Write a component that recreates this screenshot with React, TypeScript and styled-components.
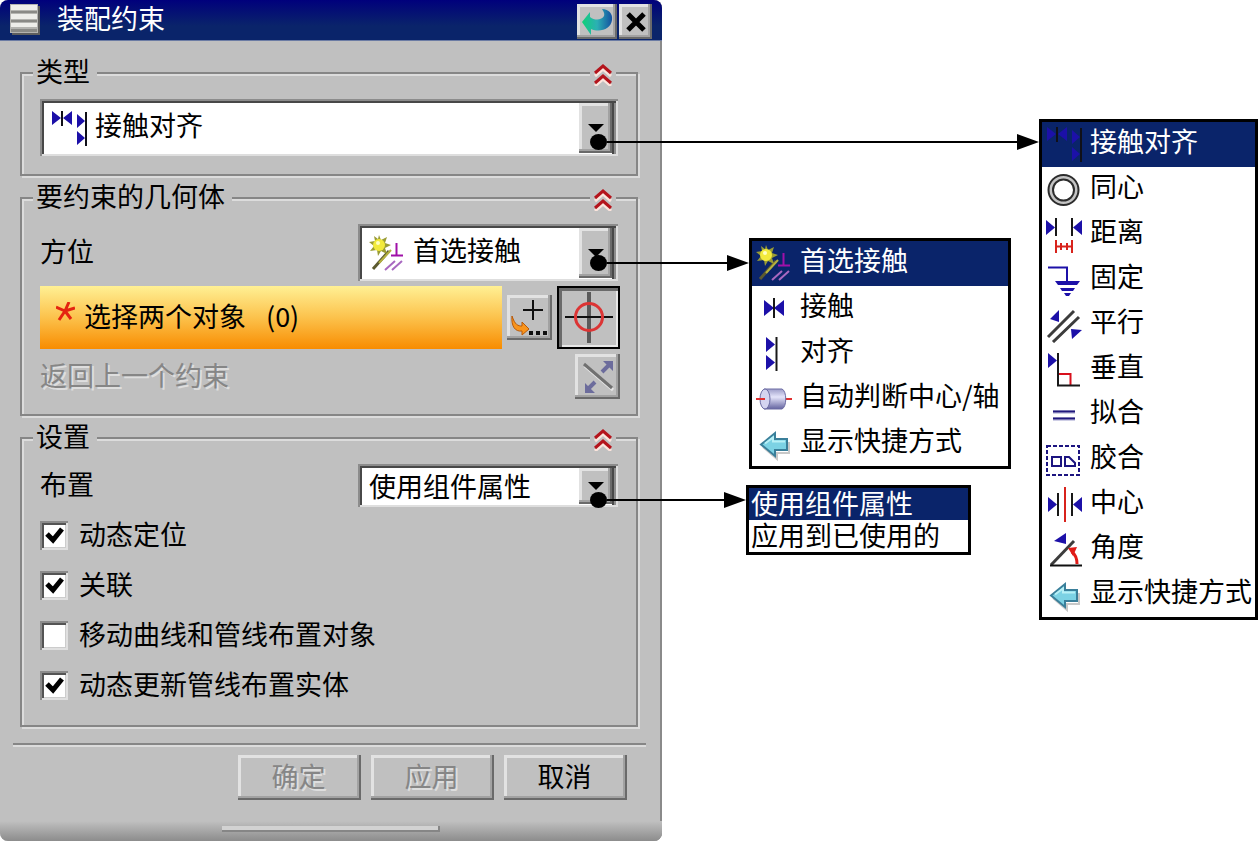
import React, { useState } from "react";
import styled, { createGlobalStyle, css } from "styled-components";

const face = "#c0c0c0";
const navy = "#0a246a";
const blue = "#1c10a8";

const GlobalStyle = createGlobalStyle`
  *, *::before, *::after { box-sizing: border-box; }
  body { margin: 0; background: #fff; }
  body, button, select, input {
    font-family: "Noto Sans CJK SC", "Noto Sans", sans-serif;
    font-size: 27px;
    line-height: 28px;
    color: #000;
  }
`;

const raised = css`
  border: 0;
  background: ${face};
  box-shadow: inset -2px -2px 0 #6a6a6a, inset -4px -4px 0 #a2a2a2,
    inset 3px 3px 0 #e2e2e2;
`;

const Page = styled.main`
  display: grid;
  grid-template-columns: minmax(0, 1fr) 266px 219px;
  column-gap: 27px;
  align-items: start;
`;

/* ---------- dialog ---------- */

const Dialog = styled.section`
  margin-right: 57px;
  background: ${face};
  border-radius: 8px;
  box-shadow: inset -2px 0 0 #8a8a8a;
`;

const TitleBar = styled.header`
  display: flex;
  align-items: flex-start;
  gap: 2px;
  height: 41px;
  padding: 4px 10px 0;
  background: linear-gradient(#00007c, ${navy} 26px);
  border-bottom: 1px solid #6c7ca4;
  border-radius: 8px 8px 0 0;
`;

const Title = styled.h1`
  flex: 1;
  margin: 0 0 0 15px;
  color: #fff;
  font-size: 27px;
  font-weight: 400;
  line-height: 28px;
`;

const TitleButton = styled.button<{ $width: number }>`
  ${raised}
  width: ${(p) => p.$width}px;
  height: 35px;
  padding: 0;
  display: grid;
  place-items: center;
`;

const Body = styled.div`
  display: flex;
  flex-direction: column;
  gap: 8px;
  padding: 18px 24px 0 20px;
`;

const Group = styled.fieldset<{ $foot: number }>`
  position: relative;
  min-width: 0;
  margin: 0;
  padding: 12px 16px ${(p) => p.$foot}px 18px;
  border: 2px solid #868686;
  box-shadow: 2px 2px 0 #dcdcdc, inset 2px 2px 0 #dcdcdc;
`;

const Legend = styled.legend`
  margin-left: -7px;
  padding: 0 7px 4px 3px;
  background: ${face};
  line-height: 24px;
`;

const Collapse = styled.button`
  position: absolute;
  top: -24px;
  right: 20px;
  width: 26px;
  height: 24px;
  padding: 0;
  border: 0;
  background: ${face};
  display: grid;
  place-items: center;
`;

const Stack = styled.div<{ $gap: number }>`
  display: flex;
  flex-direction: column;
  gap: ${(p) => p.$gap}px;
`;

const Row = styled.div`
  display: flex;
  align-items: center;
  gap: 5px;
`;

const RowLabel = styled.label<{ $disabled?: boolean }>`
  flex: 1;
  padding-bottom: 4px;
  ${(p) => p.$disabled && css`
    color: #868686;
    text-shadow: 2px 2px 0 #dedede;
  `}
`;

const ComboFrame = styled.div<{ $wide?: boolean; $height: number }>`
  display: flex;
  align-items: stretch;
  width: ${(p) => (p.$wide ? "auto" : "260px")};
  height: ${(p) => p.$height}px;
  margin-right: 2px;
  padding: 4px 6px 3px 4px;
  background: #fff;
  box-shadow: inset 2px 2px 0 #8c8c8c, inset -2px -2px 0 #dedede,
    inset 4px 4px 0 #484848, inset -4px 0 0 #8c8c8c, inset -6px 0 0 #484848;
  > svg { align-self: center; margin-left: 7px; }
  > svg + select { padding: 0 0 6px 8px; }
`;

const Select = styled.select`
  flex: 1;
  min-width: 0;
  appearance: none;
  border: 0;
  padding: 0 0 0 7px;
  background: transparent;
`;

const ComboArrow = styled.span`
  ${raised}
  flex: none;
  display: grid;
  place-items: center;
  width: 33px;
`;

const SelectBar = styled.div`
  flex: 1;
  display: flex;
  align-items: center;
  height: 63px;
  padding: 0 16px 4px;
  background: linear-gradient(#fff094, #fcc24c 50%, #f88c00);
  > svg { margin-bottom: 8px; }
`;

const BarText = styled.span`margin-left: 9px;`;
const Count = styled.span`margin-left: 20px;`;

const ToolButton = styled.button`
  ${raised}
  width: 45px;
  height: 45px;
  padding: 0;
`;

const TargetButton = styled.button`
  width: 63px;
  height: 63px;
  padding: 0;
  border: 2px solid #000;
  background: ${face};
  box-shadow: inset 3px 3px 0 #6a6a6a, inset -2px -2px 0 #e6e6e6;
`;

const CheckLabel = styled.label`
  display: flex;
  align-items: center;
  gap: 11px;
  height: 50px;
`;

const CheckText = styled.span`padding-bottom: 2px;`;

const CheckCell = styled.span`
  display: grid;
  width: 28px;
  height: 29px;
  > * { grid-area: 1 / 1; margin: 0; }
  > svg { visibility: hidden; pointer-events: none; }
  > input:checked + svg { visibility: visible; }
`;

const CheckInput = styled.input`
  appearance: none;
  background: #fff;
  box-shadow: inset 2px 2px 0 #8c8c8c, inset -2px -2px 0 #e0e0e0,
    inset 4px 4px 0 #545454, inset -3px -3px 0 #cccccc;
`;

const Footer = styled.footer`
  display: flex;
  justify-content: flex-end;
  gap: 10px;
  margin: 16px 16px 0 13px;
  padding: 10px 19px 0 0;
  border-top: 2px solid #868686;
  box-shadow: inset 0 2px 0 #dcdcdc;
`;

const PushButton = styled.button`
  ${raised}
  width: 123px;
  height: 45px;
  padding: 0 2px 4px 0;
  &:disabled {
    color: #868686;
    text-shadow: 2px 2px 0 #dedede;
  }
`;

const Grip = styled.div`
  display: flex;
  justify-content: center;
  height: 20px;
  margin-top: 21px;
  padding-top: 5px;
  background: linear-gradient(${face}, #8c8c8c);
  border-radius: 0 0 8px 8px;
`;

const GripBar = styled.span`
  width: 33%;
  height: 6px;
  background: #d2d2d2;
  box-shadow: inset -2px -2px 0 #868686;
`;

/* ---------- pop-up lists ---------- */

const MiddleColumn = styled.div`
  display: flex;
  flex-direction: column;
  gap: 16px;
  padding-top: 238px;
`;

const RightColumn = styled.div`padding-top: 119px;`;

const Popup = styled.div<{ $width: string; $indent?: number }>`
  position: relative;
  width: ${(p) => p.$width};
  margin-left: ${(p) => p.$indent ?? 0}px;
`;

const List = styled.ul`
  margin: 0;
  padding: 0;
  list-style: none;
  border: 3px solid #000;
  background: #fff;
`;

const Item = styled.button<{ $active: boolean; $compact?: boolean }>`
  display: flex;
  align-items: center;
  gap: 8px;
  width: 100%;
  height: ${(p) => (p.$compact ? 32 : 45)}px;
  padding: 0 0 0 ${(p) => (p.$compact ? 2 : 4)}px;
  border: 0;
  background: ${(p) => (p.$active ? navy : "#fff")};
  color: ${(p) => (p.$active ? "#fff" : "#000")};
  white-space: nowrap;
  > span { padding-bottom: ${(p) => (p.$compact ? 2 : 7)}px; }
`;

const Connector = styled.div<{ $length: number; $top: number }>`
  position: absolute;
  right: 100%;
  top: ${(p) => p.$top}px;
  width: ${(p) => p.$length}px;
  height: 16px;
  display: flex;
  align-items: center;
  pointer-events: none;
  &::before {
    content: "";
    width: 17px;
    height: 16px;
    border-radius: 50%;
    background: #000;
  }
  &::after {
    content: "";
    border: solid transparent;
    border-width: 8px 0 8px 22px;
    border-left-color: #000;
  }
`;

const Line = styled.span`
  flex: 1;
  height: 2px;
  background: #000;
`;

/* ---------- drawings ---------- */

const Glyph = ({ children }: { children: React.ReactNode }) => (
  <svg width="36" height="37" viewBox="0 0 36 37" fill="none" aria-hidden="true">
    {children}
  </svg>
);

const icons = {
  contactAlign: (
    <Glyph>
      <path d="M1 1l9 7-9 7zM21 1l-9 7 9 7zM26 4l8 7-8 7zM26 21l8 7-8 7z" fill={blue} />
      <path d="M11 1v15M35 2v34" stroke="#101018" strokeWidth="2" />
    </Glyph>
  ),
  concentric: (
    <Glyph>
      <circle cx="17.500" cy="19" r="13" stroke="#c4c4c4" strokeWidth="4" />
      <circle cx="17.500" cy="19" r="15" stroke="#2c2c2c" strokeWidth="2" />
      <circle cx="17.500" cy="19" r="10.500" stroke="#2c2c2c" strokeWidth="2" />
    </Glyph>
  ),
  distance: (
    <Glyph>
      <path d="M0 4l9 7.500-9 7.500zM36 4l-9 7.500 9 7.500z" fill={blue} />
      <path d="M10 2v18M26 2v18" stroke="#181818" strokeWidth="2" />
      <path d="M10 24v13M26 24v13M10 30.500h16M15 27v7M21 27v7" stroke="#d8231c" strokeWidth="2" />
    </Glyph>
  ),
  fixed: (
    <Glyph>
      <path d="M2 6.500h19V21" stroke={blue} strokeWidth="2" />
      <path d="M9 20h25l-3 4H12zM14 27h15l-2 3H16zM18 32h7l-2 3h-3z" fill={blue} />
    </Glyph>
  ),
  parallel: (
    <Glyph>
      <path d="M2 31L28 5M7 36L33 11" stroke="#3c3c3c" strokeWidth="3" />
      <path d="M4 13l9-9v12zM25 23l11 1-10 9z" fill={blue} />
    </Glyph>
  ),
  perpendicular: (
    <Glyph>
      <path d="M2 2l9 7.500L2 17z" fill={blue} />
      <path d="M12.500 23h12v11" stroke="#d8101c" strokeWidth="2" />
      <path d="M12 2v32.500h22" stroke="#181818" strokeWidth="2" />
    </Glyph>
  ),
  fit: (
    <Glyph>
      <path d="M7 16h22M7 23h22" stroke="#cfcfe6" strokeWidth="4" />
      <path d="M7 15.500h22M7 22.500h22" stroke="#20187c" strokeWidth="2" />
    </Glyph>
  ),
  glue: (
    <Glyph>
      <rect x="1" y="5" width="32" height="29" stroke="#1c1480" strokeWidth="2" strokeDasharray="4 2" />
      <path d="M6 16h9v9H6zM19 16h4l6 6v3H19z" stroke="#1c1480" strokeWidth="2" />
    </Glyph>
  ),
  center: (
    <Glyph>
      <path d="M2 11l9 7.500L2 26zM36 11l-9 7.500 9 7.500z" fill={blue} />
      <path d="M12 7v23M26 7v23" stroke="#181818" strokeWidth="2" />
      <path d="M19 1v35" stroke="#d8231c" strokeWidth="2" />
    </Glyph>
  ),
  angle: (
    <Glyph>
      <path d="M8 10l12-8v11z" fill={blue} />
      <path d="M28 10L5 34" stroke="#3c3c3c" strokeWidth="3" />
      <path d="M4 34.500h32" stroke="#101010" strokeWidth="2" />
      <path d="M31 33c0-5-1-9-5-12" stroke="#e01c18" strokeWidth="3" />
      <path d="M22 17l9-1-4 9z" fill="#e01c18" />
    </Glyph>
  ),
  shortcut: (
    <Glyph>
      <path d="M7 22l14 12v-6h12v-11" stroke="#c8c8c8" strokeWidth="2" />
      <path d="M5 19.500L19 8v6h12v11H19v6z" fill="#7cd2e4" stroke="#3a7f9a" strokeWidth="2" />
      <path d="M9 18.500l8-6v4h12" stroke="#b8f0f6" strokeWidth="2" />
    </Glyph>
  ),
  prefer: (
    <Glyph>
      <path d="M20 16L4 34" stroke="#5c5a30" strokeWidth="3" />
      <path d="M22 15L10 28" stroke="#b4b040" strokeWidth="2" />
      <path
        d="M10 0l2 5 6-3-2 6 6 2-6 3 2 6-6-3-3 5-1-6-7 1 4-5-5-4 6-1-1-5 4 3z"
        fill="#9a9c34"
      />
      <circle cx="10" cy="10" r="6" fill="#f2ea3c" />
      <circle cx="9" cy="8" r="2" fill="#ffffc0" />
      <path d="M27.500 8v12M22 20.500h12" stroke="#a010a8" strokeWidth="2" />
      <path d="M16 35l10-9M23 35l10-9" stroke="#a868c0" strokeWidth="2" />
    </Glyph>
  ),
  contact: (
    <Glyph>
      <path d="M8 10l10 8-10 8zM28 10l-10 8 10 8z" fill={blue} />
      <path d="M18 8v20" stroke="#181818" strokeWidth="2" />
    </Glyph>
  ),
  align: (
    <Glyph>
      <path d="M10 2l9 7.500-9 7.500zM10 20l9 7.500-9 7.500z" fill={blue} />
      <path d="M20.500 2v34" stroke="#181818" strokeWidth="2" />
    </Glyph>
  ),
  axis: (
    <Glyph>
      <defs>
        <linearGradient id="cylinder" x1="0" y1="0" x2="0" y2="1">
          <stop offset="0" stopColor="#9c9cc8" />
          <stop offset="0.4" stopColor="#e4e4fa" />
          <stop offset="1" stopColor="#6464a0" />
        </linearGradient>
      </defs>
      <path d="M28 19h8" stroke="#e03030" strokeWidth="2" />
      <path d="M8 9h18c5 2 5 18 0 20H8z" fill="url(#cylinder)" stroke="#6c6ca4" strokeWidth="1" />
      <ellipse cx="9" cy="19" rx="5" ry="10" fill="#d4d4f0" stroke="#6c6ca4" strokeWidth="1" />
      <path d="M0 19h9" stroke="#e03030" strokeWidth="2" />
    </Glyph>
  ),
};

type IconName = keyof typeof icons;

const Chevrons = () => (
  <svg width="18" height="22" viewBox="0 0 18 22" fill="none" aria-hidden="true">
    <path d="M1 12l8-7 8 7M1 22l8-7 8 7" stroke="#fbe4dc" strokeWidth="3" />
    <path d="M1 9l8-7 8 7M1 19l8-7 8 7" stroke="#b4141c" strokeWidth="3" />
  </svg>
);

const MenuBars = () => (
  <svg width="30" height="31" viewBox="0 0 30 31" aria-hidden="true">
    <path d="M2 2h28v29H2z" fill="#5e5e5e" />
    <path d="M0 0h28v29H0z" fill="#b4b4b0" />
    <path d="M1 1h26v5H1zM1 10h26v5H1zM1 19h26v4H1z" fill="#eeeeea" />
    <path d="M1 7h26v2H1zM1 16h26v2H1zM1 25h26v3H1z" fill="#8a8a86" />
  </svg>
);

const ResetArrow = () => (
  <svg width="32" height="29" viewBox="0 0 32 29" aria-hidden="true">
    <defs>
      <linearGradient id="reset" x1="0" x2="1">
        <stop offset="0" stopColor="#10d078" />
        <stop offset="0.5" stopColor="#2cb0b4" />
        <stop offset="1" stopColor="#1450a0" />
      </linearGradient>
    </defs>
    <path
      d="M1 15L9 5v5c5 4 12 3 14-1 1-3-1-5-2-7 7 0 11 5 10 11-1 9-12 13-21 9v6z"
      fill="url(#reset)"
    />
  </svg>
);

const Cross = () => (
  <svg width="20" height="20" viewBox="0 0 20 20" aria-hidden="true">
    <path d="M2 2l16 16M18 2L2 18" stroke="#000" strokeWidth="5" />
  </svg>
);

const DownTriangle = () => (
  <svg width="16" height="8" viewBox="0 0 16 8" aria-hidden="true">
    <path d="M0 0h16L8 8z" fill="#000" />
  </svg>
);

const Asterisk = () => (
  <svg width="19" height="20" viewBox="0 0 19 20" aria-hidden="true">
    <path
      d="M9 9l4-9M9 9l10-3M9 9L0 5M9 9L3 18M9 9l6 8"
      fill="none"
      stroke="#e42410"
      strokeWidth="3"
    />
  </svg>
);

const PointIcon = () => (
  <svg width="45" height="45" viewBox="0 0 45 45" aria-hidden="true">
    <path d="M26 5v20M16 15h20" stroke="#101010" strokeWidth="2" />
    <path
      d="M5 21c3 9 6 10 10 10v-4l7 7-7 6v-4C8 37 4 31 5 21z"
      fill="#f8941c"
      stroke="#b85808"
      strokeWidth="1"
    />
    <path d="M22 36h4v4h-4zM29 36h4v4h-4zM36 36h4v4h-4z" fill="#101010" />
  </svg>
);

const TargetIcon = () => (
  <svg width="59" height="59" viewBox="0 0 59 59" fill="none" aria-hidden="true">
    <path d="M30 4v51" stroke="#5a5a5a" strokeWidth="4" />
    <path d="M6 29h48" stroke="#101010" strokeWidth="2" />
    <circle cx="30" cy="29" r="13.500" stroke="#dc3434" strokeWidth="3" />
  </svg>
);

const ReverseIcon = () => (
  <svg width="45" height="45" viewBox="0 0 45 45" aria-hidden="true">
    <path d="M10 12l28 24" stroke="#e6e6e6" strokeWidth="3" />
    <path d="M9 10l28 24" stroke="#707070" strokeWidth="3" />
    <path d="M27 18l7-7M20 28l-7 7" stroke="#6c6c9c" strokeWidth="4" />
    <path d="M28 7h10v10zM10 29v10h10z" fill="#6c6c9c" />
  </svg>
);

const Tick = () => (
  <svg width="28" height="29" viewBox="0 0 28 29" fill="none" aria-hidden="true">
    <path d="M7 13l6 6 9-11" stroke="#000" strokeWidth="5" />
  </svg>
);

/* ---------- parts ---------- */

interface ComboProps {
  id: string;
  label?: string;
  icon?: IconName;
  options: string[];
  wide?: boolean;
  height: number;
}

const Combo = ({ id, label, icon, options, wide, height }: ComboProps) => (
  <ComboFrame $wide={wide} $height={height}>
    {icon && icons[icon]}
    <Select id={id} aria-label={label}>
      {options.map((o) => (
        <option key={o}>{o}</option>
      ))}
    </Select>
    <ComboArrow>
      <DownTriangle />
    </ComboArrow>
  </ComboFrame>
);

interface Entry {
  text: string;
  icon?: IconName;
}

const PopupList = ({ entries, label, compact }: { entries: Entry[]; label: string; compact?: boolean }) => {
  const [active, setActive] = useState(0);
  return (
    <List aria-label={label}>
      {entries.map((e, i) => (
        <li key={e.text}>
          <Item type="button" $active={i === active} $compact={compact} onClick={() => setActive(i)}>
            {e.icon && icons[e.icon]}
            <span>{e.text}</span>
          </Item>
        </li>
      ))}
    </List>
  );
};

const typeEntries: Entry[] = [
  { text: "接触对齐", icon: "contactAlign" },
  { text: "同心", icon: "concentric" },
  { text: "距离", icon: "distance" },
  { text: "固定", icon: "fixed" },
  { text: "平行", icon: "parallel" },
  { text: "垂直", icon: "perpendicular" },
  { text: "拟合", icon: "fit" },
  { text: "胶合", icon: "glue" },
  { text: "中心", icon: "center" },
  { text: "角度", icon: "angle" },
  { text: "显示快捷方式", icon: "shortcut" },
];

const orientationEntries: Entry[] = [
  { text: "首选接触", icon: "prefer" },
  { text: "接触", icon: "contact" },
  { text: "对齐", icon: "align" },
  { text: "自动判断中心/轴", icon: "axis" },
  { text: "显示快捷方式", icon: "shortcut" },
];

const arrangementEntries: Entry[] = [{ text: "使用组件属性" }, { text: "应用到已使用的" }];

const settings = [
  { text: "动态定位", on: true },
  { text: "关联", on: true },
  { text: "移动曲线和管线布置对象", on: false },
  { text: "动态更新管线布置实体", on: true },
];

const texts = (entries: Entry[]) => entries.map((e) => e.text);

export default function App() {
  return (
    <Page>
      <GlobalStyle />
      <Dialog aria-labelledby="dialog-title">
        <TitleBar>
          <MenuBars />
          <Title id="dialog-title">装配约束</Title>
          <TitleButton type="button" $width={40} aria-label="重置">
            <ResetArrow />
          </TitleButton>
          <TitleButton type="button" $width={33} aria-label="关闭">
            <Cross />
          </TitleButton>
        </TitleBar>

        <Body>
          <Group $foot={18}>
            <Legend>类型</Legend>
            <Collapse type="button" aria-label="折叠类型">
              <Chevrons />
            </Collapse>
            <Combo id="type" label="类型" icon="contactAlign" options={texts(typeEntries)} wide height={57} />
          </Group>

          <Group $foot={15}>
            <Legend>要约束的几何体</Legend>
            <Collapse type="button" aria-label="折叠几何体">
              <Chevrons />
            </Collapse>
            <Stack $gap={5}>
              <Row>
                <RowLabel htmlFor="orientation">方位</RowLabel>
                <Combo id="orientation" icon="prefer" options={texts(orientationEntries)} height={57} />
              </Row>
              <Row>
                <SelectBar>
                  <Asterisk />
                  <BarText>选择两个对象</BarText>
                  <Count>(0)</Count>
                </SelectBar>
                <ToolButton type="button" aria-label="点构造器">
                  <PointIcon />
                </ToolButton>
                <TargetButton type="button" aria-label="选择对象">
                  <TargetIcon />
                </TargetButton>
              </Row>
              <Row>
                <RowLabel htmlFor="reverse" $disabled>
                  返回上一个约束
                </RowLabel>
                <ToolButton id="reverse" type="button" disabled>
                  <ReverseIcon />
                </ToolButton>
              </Row>
            </Stack>
          </Group>

          <Group $foot={15}>
            <Legend>设置</Legend>
            <Collapse type="button" aria-label="折叠设置">
              <Chevrons />
            </Collapse>
            <Stack $gap={3}>
              <Row>
                <RowLabel htmlFor="arrangement">布置</RowLabel>
                <Combo id="arrangement" options={texts(arrangementEntries)} height={43} />
              </Row>
              <div>
                {settings.map((s) => (
                  <CheckLabel key={s.text}>
                    <CheckCell>
                      <CheckInput type="checkbox" defaultChecked={s.on} />
                      <Tick />
                    </CheckCell>
                    <CheckText>{s.text}</CheckText>
                  </CheckLabel>
                ))}
              </div>
            </Stack>
          </Group>
        </Body>

        <Footer>
          <PushButton type="button" disabled>
            确定
          </PushButton>
          <PushButton type="button" disabled>
            应用
          </PushButton>
          <PushButton type="button">取消</PushButton>
        </Footer>
        <Grip>
          <GripBar />
        </Grip>
      </Dialog>

      <MiddleColumn>
        <Popup $width="262px" $indent={3}>
          <PopupList entries={orientationEntries} label="方位选项" />
          <Connector $length={159} $top={17}>
            <Line />
          </Connector>
        </Popup>
        <Popup $width="225px">
          <PopupList entries={arrangementEntries} label="布置选项" compact />
          <Connector $length={156} $top={7}>
            <Line />
          </Connector>
        </Popup>
      </MiddleColumn>

      <RightColumn>
        <Popup $width="100%">
          <PopupList entries={typeEntries} label="类型选项" />
          <Connector $length={449} $top={15}>
            <Line />
          </Connector>
        </Popup>
      </RightColumn>
    </Page>
  );
}
